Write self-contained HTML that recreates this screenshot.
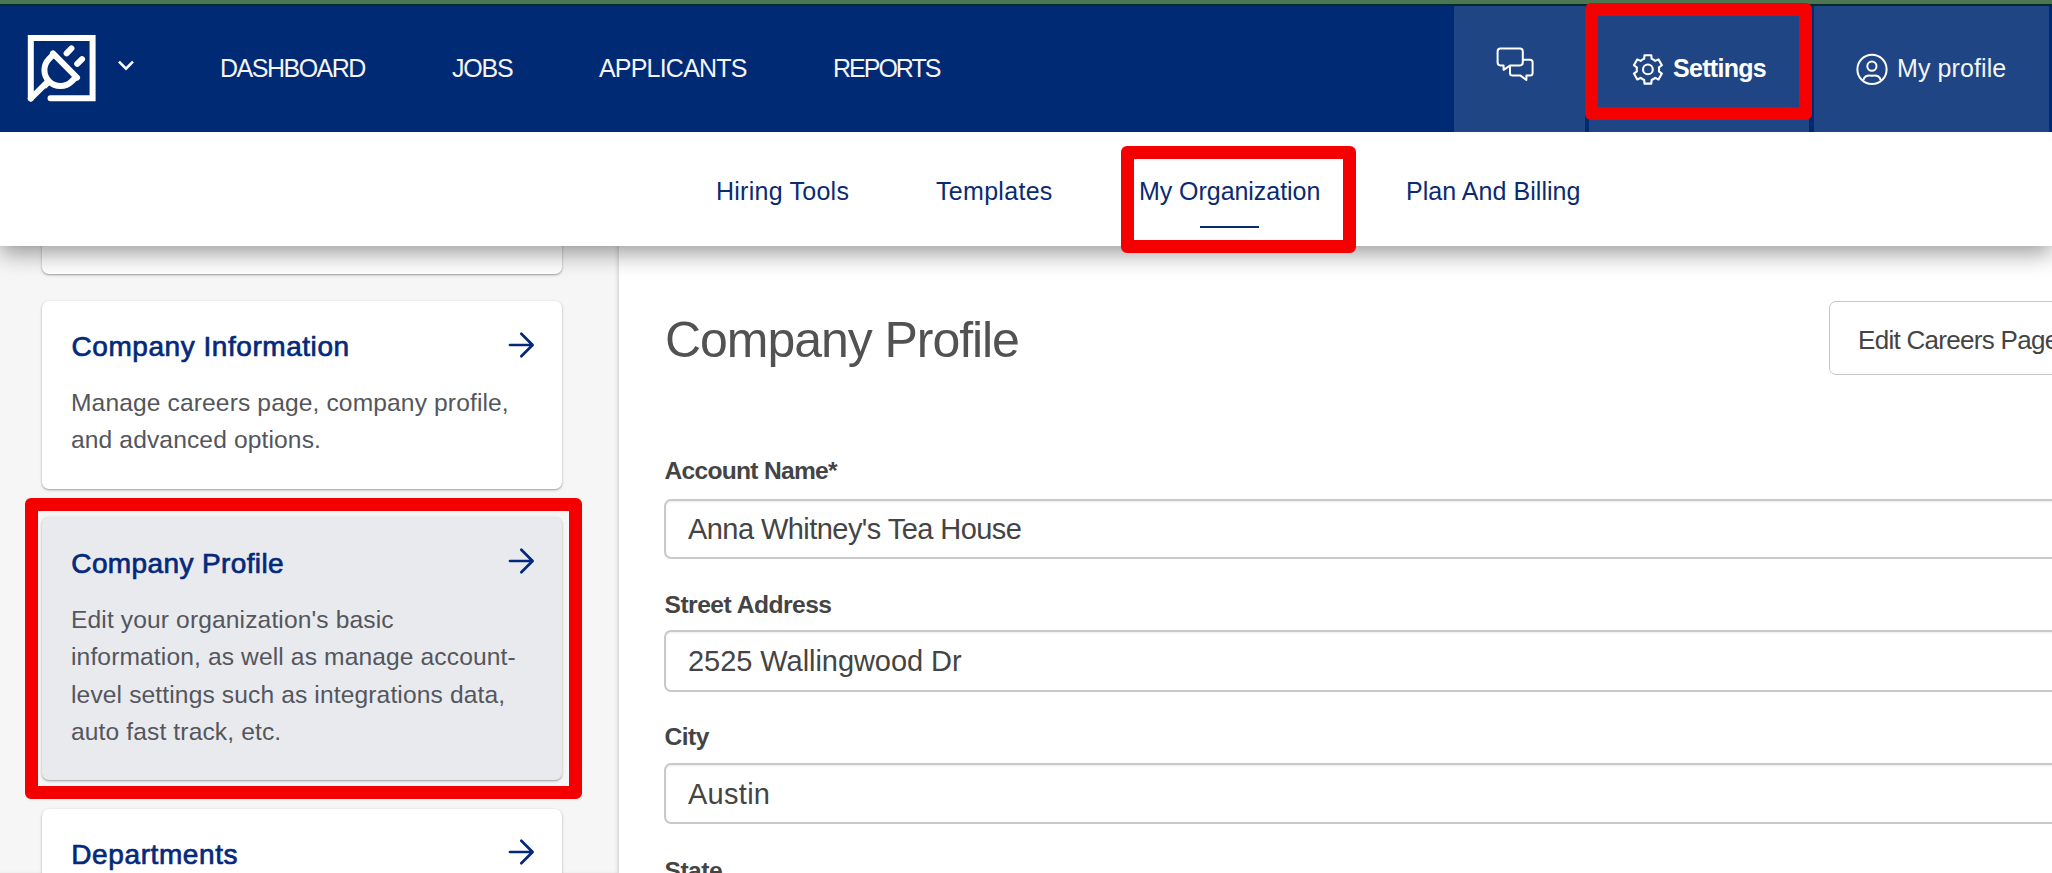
<!DOCTYPE html><html><head><meta charset="utf-8"><style>
html,body{margin:0;padding:0;}
body{width:2052px;height:873px;overflow:hidden;position:relative;background:#fff;font-family:"Liberation Sans", sans-serif;}
.t{position:absolute;white-space:nowrap;}
.abs{position:absolute;}
</style></head><body>
<div class="abs" style="left:0;top:0;width:2052px;height:132px;z-index:10;overflow:hidden">
<div class="abs" style="left:0;top:0;width:2052px;height:4px;background:#4c7650"></div>
<div class="abs" style="left:0;top:4px;width:2052px;height:2px;background:#022a30"></div>
<div class="abs" style="left:0;top:6px;width:2052px;height:126px;background:#012a74"></div>
<div class="abs" style="left:1454px;top:6px;width:131px;height:126px;background:#1f4584"></div>
<div class="abs" style="left:1589px;top:6px;width:220px;height:126px;background:#1f4584"></div>
<div class="abs" style="left:1814px;top:6px;width:235px;height:126px;background:#1f4584"></div>
<svg class="abs" style="left:0;top:0" width="160" height="132" viewBox="0 0 160 132">
<g fill="none" stroke="#fff" stroke-width="6">
<path d="M30.8 98.5 V38.1 H92.6 V98.3 H50.5" stroke-linecap="round" stroke-linejoin="miter"/>
<path d="M30.8 98.5 L46 83.3" stroke-linecap="round"/>
<g transform="translate(65 65.5) rotate(45)">
<path d="M-17 0 H17" stroke-linecap="round"/>
<path d="M-16 0 V6.5 A16 16 0 0 0 16 6.5 V0"/>
<path d="M0 21 V30"/>
<path d="M-7.5 -9.8 V-16.6" stroke-linecap="round"/>
<path d="M7.5 -9.8 V-16.6" stroke-linecap="round"/>
</g>
</g>
<path d="M119 61.6 L126 68.6 L133 61.6" fill="none" stroke="#fff" stroke-width="2.6"/>
</svg>
<div class="t" style="left:220px;top:55.84px;font-size:25px;line-height:25px;color:#f4f4f6;font-weight:400;letter-spacing:-1.5px;">DASHBOARD</div>
<div class="t" style="left:452px;top:55.84px;font-size:25px;line-height:25px;color:#f4f4f6;font-weight:400;letter-spacing:-1.2px;">JOBS</div>
<div class="t" style="left:599px;top:55.84px;font-size:25px;line-height:25px;color:#f4f4f6;font-weight:400;letter-spacing:-0.8px;">APPLICANTS</div>
<div class="t" style="left:833px;top:55.84px;font-size:25px;line-height:25px;color:#f4f4f6;font-weight:400;letter-spacing:-2.0px;">REPORTS</div>
<svg class="abs" style="left:1480px;top:30px" width="70" height="70" viewBox="1480 30 70 70">
<g fill="none" stroke="#fff" stroke-width="2" stroke-linejoin="round">
<path d="M1512 59.8 H1530 Q1532.6 59.8 1532.6 62.4 V73 Q1532.6 75.6 1530 75.6 H1526.4 V80 L1520.5 75.6 H1512.5 Q1510 75.6 1510 73 V62"/>
<path fill="#1f4584" d="M1500.4 48.6 H1520 Q1522.8 48.6 1522.8 51.4 V62.6 Q1522.8 65.4 1520 65.4 H1510.4 L1503.6 69.8 V65.4 H1500.4 Q1497.6 65.4 1497.6 62.6 V51.4 Q1497.6 48.6 1500.4 48.6Z"/>
</g></svg>
<svg class="abs" style="left:1620px;top:40px" width="60" height="60" viewBox="1620 40 60 60">
<g fill="none" stroke="#fff" stroke-width="2.1" stroke-linejoin="round">
<path d="M1644.16 58.84 L1644.50 55.20 L1651.30 55.20 L1651.64 58.84 A11.2 11.2 0 0 1 1655.18 60.89 L1658.50 59.36 L1661.90 65.24 L1658.91 67.36 A11.2 11.2 0 0 1 1658.91 71.44 L1661.90 73.56 L1658.50 79.44 L1655.18 77.91 A11.2 11.2 0 0 1 1651.64 79.96 L1651.30 83.60 L1644.50 83.60 L1644.16 79.96 A11.2 11.2 0 0 1 1640.62 77.91 L1637.30 79.44 L1633.90 73.56 L1636.89 71.44 A11.2 11.2 0 0 1 1636.89 67.36 L1633.90 65.24 L1637.30 59.36 L1640.62 60.89 A11.2 11.2 0 0 1 1644.16 58.84 Z"/>
<circle cx="1647.9" cy="69.4" r="4.9"/>
</g></svg>
<div class="t" style="left:1673px;top:55.84px;font-size:25px;line-height:25px;color:#fff;font-weight:700;letter-spacing:-0.7px;">Settings</div>
<svg class="abs" style="left:1850px;top:45px" width="45" height="45" viewBox="1850 45 45 45">
<g fill="none" stroke="#fff" stroke-width="2" stroke-linejoin="round">
<circle cx="1872" cy="69.4" r="14.6"/>
<circle cx="1871.9" cy="66.2" r="4.6"/>
<path d="M1863.4 80.2 C1863.8 76.5 1867 74.8 1872 75.8 C1877 74.8 1880.2 76.5 1880.6 80.2"/>
</g></svg>
<div class="t" style="left:1897px;top:55.84px;font-size:25px;line-height:25px;color:#f4f4f6;font-weight:400;letter-spacing:0.1px;">My profile</div>
</div>
<div class="abs" style="left:0;top:132px;width:2052px;height:114px;background:#fff;box-shadow:0 7px 22px rgba(0,0,0,0.40);z-index:5"></div>
<div class="abs" style="left:0;top:132px;width:2052px;height:114px;z-index:6">
</div>
<div class="t" style="left:716px;top:179.14px;font-size:25px;line-height:25px;color:#0b2b70;font-weight:400;letter-spacing:0.25px;z-index:7">Hiring Tools</div>
<div class="t" style="left:936px;top:179.14px;font-size:25px;line-height:25px;color:#0b2b70;font-weight:400;letter-spacing:0.3px;z-index:7">Templates</div>
<div class="t" style="left:1139px;top:179.14px;font-size:25px;line-height:25px;color:#0b2b70;font-weight:400;letter-spacing:-0.05px;z-index:7">My Organization</div>
<div class="t" style="left:1406px;top:179.14px;font-size:25px;line-height:25px;color:#0b2b70;font-weight:400;letter-spacing:0.05px;z-index:7">Plan And Billing</div>
<div class="abs" style="left:1200px;top:226px;width:59px;height:2px;background:#0b2b70;z-index:7"></div>
<div class="abs" style="left:0;top:246px;width:619px;height:627px;background:#f6f6f6;box-shadow:inset -3px 0 4px -2px rgba(0,0,0,0.17)"></div>
<div class="abs" style="left:42px;top:150px;width:520px;height:124px;background:#fff;border-radius:7px;box-shadow:0 1px 3px rgba(0,0,0,0.28),0 1px 1px rgba(0,0,0,0.12)"></div>
<div class="abs" style="left:42px;top:301px;width:520px;height:188px;background:#fff;border-radius:7px;box-shadow:0 1px 3px rgba(0,0,0,0.28),0 1px 1px rgba(0,0,0,0.12)"></div>
<div class="abs" style="left:42px;top:517px;width:520px;height:263px;background:#e9eaee;border-radius:7px;box-shadow:0 1px 3px rgba(0,0,0,0.28),0 1px 1px rgba(0,0,0,0.12)"></div>
<div class="abs" style="left:42px;top:809px;width:520px;height:120px;background:#fff;border-radius:7px;box-shadow:0 1px 3px rgba(0,0,0,0.28),0 1px 1px rgba(0,0,0,0.12)"></div>
<div class="t" style="left:71.5px;top:332.90px;font-size:28px;line-height:28px;color:#05297a;font-weight:400;letter-spacing:0.55px;-webkit-text-stroke:0.7px #05297a">Company Information</div>
<svg class="abs" style="left:500px;top:324.6px" width="40" height="40" viewBox="500 324.6 40 40"><path d="M510 344.6 H532 M521.3 333.3 L532.6 344.6 L521.3 355.90000000000003" fill="none" stroke="#05297a" stroke-width="2.7" stroke-linecap="round" stroke-linejoin="round"/></svg>
<div class="t" style="left:71px;top:390.88px;font-size:24.6px;line-height:24.6px;color:#53565c;font-weight:400;letter-spacing:0.12px;">Manage careers page, company profile,</div>
<div class="t" style="left:71px;top:428.18px;font-size:24.6px;line-height:24.6px;color:#53565c;font-weight:400;letter-spacing:0.12px;">and advanced options.</div>
<div class="t" style="left:71.3px;top:549.60px;font-size:28px;line-height:28px;color:#05297a;font-weight:400;letter-spacing:0.38px;-webkit-text-stroke:0.7px #05297a">Company Profile</div>
<svg class="abs" style="left:500px;top:541px" width="40" height="40" viewBox="500 541 40 40"><path d="M510 561 H532 M521.3 549.7 L532.6 561 L521.3 572.3" fill="none" stroke="#05297a" stroke-width="2.7" stroke-linecap="round" stroke-linejoin="round"/></svg>
<div class="t" style="left:71px;top:608.18px;font-size:24.6px;line-height:24.6px;color:#53565c;font-weight:400;letter-spacing:0.12px;">Edit your organization's basic</div>
<div class="t" style="left:71px;top:645.38px;font-size:24.6px;line-height:24.6px;color:#53565c;font-weight:400;letter-spacing:0.12px;">information, as well as manage account-</div>
<div class="t" style="left:71px;top:682.58px;font-size:24.6px;line-height:24.6px;color:#53565c;font-weight:400;letter-spacing:0.12px;">level settings such as integrations data,</div>
<div class="t" style="left:71px;top:719.78px;font-size:24.6px;line-height:24.6px;color:#53565c;font-weight:400;letter-spacing:0.12px;">auto fast track, etc.</div>
<div class="t" style="left:71.3px;top:841.30px;font-size:28px;line-height:28px;color:#05297a;font-weight:400;letter-spacing:0.6px;-webkit-text-stroke:0.7px #05297a">Departments</div>
<svg class="abs" style="left:500px;top:832.3px" width="40" height="40" viewBox="500 832.3 40 40"><path d="M510 852.3 H532 M521.3 841.0 L532.6 852.3 L521.3 863.5999999999999" fill="none" stroke="#05297a" stroke-width="2.7" stroke-linecap="round" stroke-linejoin="round"/></svg>
<div class="t" style="left:665px;top:314.57px;font-size:50px;line-height:50px;color:#525252;font-weight:400;letter-spacing:-1.05px;">Company Profile</div>
<div class="abs" style="left:1829px;top:301px;width:300px;height:74px;border:1.5px solid #c8c8c8;border-radius:7px;box-sizing:border-box;background:#fff"></div>
<div class="t" style="left:1858px;top:326.69px;font-size:26px;line-height:26px;color:#444;font-weight:400;letter-spacing:-0.7px;">Edit Careers Page</div>
<div class="t" style="left:664.5px;top:459.38px;font-size:24.6px;line-height:24.6px;color:#444;font-weight:700;letter-spacing:-0.72px;">Account Name*</div>
<div class="abs" style="left:664px;top:498.5px;width:1500px;height:60px;border:2px solid #c9c9c9;border-radius:7px;box-sizing:border-box;background:#fff;box-shadow:inset 0 1px 2px rgba(0,0,0,0.08)"></div>
<div class="t" style="left:688px;top:514.75px;font-size:29px;line-height:29px;color:#444;font-weight:400;letter-spacing:-0.56px;">Anna Whitney's Tea House</div>
<div class="t" style="left:664.5px;top:593.08px;font-size:24.6px;line-height:24.6px;color:#444;font-weight:700;letter-spacing:-0.5px;">Street Address</div>
<div class="abs" style="left:664px;top:630.4px;width:1500px;height:61.4px;border:2px solid #c9c9c9;border-radius:7px;box-sizing:border-box;background:#fff;box-shadow:inset 0 1px 2px rgba(0,0,0,0.08)"></div>
<div class="t" style="left:688px;top:646.75px;font-size:29px;line-height:29px;color:#444;font-weight:400;letter-spacing:-0.05px;">2525 Wallingwood Dr</div>
<div class="t" style="left:664.5px;top:725.28px;font-size:24.6px;line-height:24.6px;color:#444;font-weight:700;letter-spacing:-0.5px;">City</div>
<div class="abs" style="left:664px;top:763.4px;width:1500px;height:60.6px;border:2px solid #c9c9c9;border-radius:7px;box-sizing:border-box;background:#fff;box-shadow:inset 0 1px 2px rgba(0,0,0,0.08)"></div>
<div class="t" style="left:688px;top:779.85px;font-size:29px;line-height:29px;color:#444;font-weight:400;letter-spacing:0.28px;">Austin</div>
<div class="t" style="left:664.5px;top:858.68px;font-size:24.6px;line-height:24.6px;color:#444;font-weight:700;letter-spacing:-0.5px;">State</div>
<div class="abs" style="left:1585px;top:3px;width:227px;height:117px;border:13px solid #f50000;border-radius:6px;box-sizing:border-box;z-index:20"></div>
<div class="abs" style="left:1121px;top:146px;width:235px;height:107px;border:13px solid #f50000;border-radius:6px;box-sizing:border-box;z-index:20"></div>
<div class="abs" style="left:25px;top:498px;width:557px;height:301px;border:13px solid #f50000;border-radius:6px;box-sizing:border-box;z-index:20"></div>
</body></html>
